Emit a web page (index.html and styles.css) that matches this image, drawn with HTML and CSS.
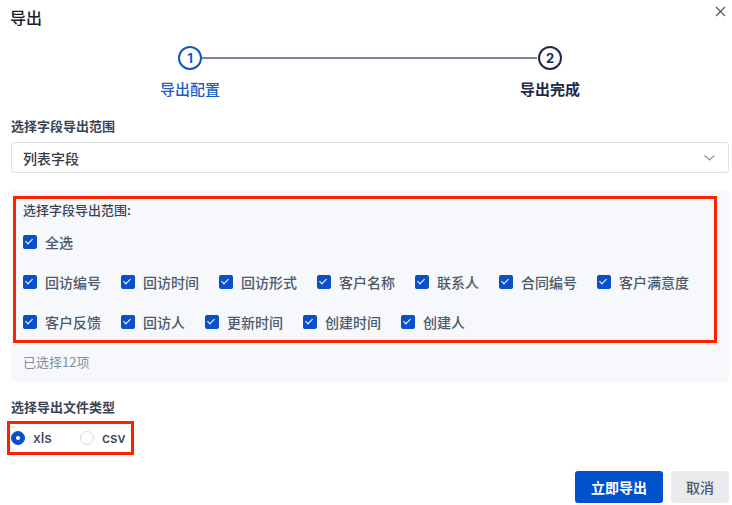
FILE: index.html
```html
<!DOCTYPE html>
<html lang="zh-CN">
<head>
  <meta charset="UTF-8">
  <title>导出</title>
  <link rel="stylesheet" href="styles.css">
</head>
<body>
  <div class="dialog">
    <div class="header">
      <h2>导出</h2>
      <span class="close">
        <svg width="11" height="11" viewBox="0 0 11 11"><path d="M1 1L10 10M10 1L1 10" stroke="#4e5a70" stroke-width="1.2" fill="none"/></svg>
      </span>
    </div>

    <div class="steps">
      <div class="step active">
        <div class="circle">1</div>
        <div class="step-label">导出配置</div>
      </div>
      <div class="step done">
        <div class="circle">2</div>
        <div class="step-label">导出完成</div>
      </div>
    </div>

    <div class="field-label">选择字段导出范围</div>
    <div class="select">
      <span>列表字段</span>
      <svg width="11" height="6" viewBox="0 0 11 6"><path d="M0.5 0.5L5.5 5L10.5 0.5" stroke="#8a93a5" stroke-width="1.2" fill="none"/></svg>
    </div>

    <div class="panel">
      <div class="mark-box fields">
        <div class="fields-title">选择字段导出范围:</div>
        <div class="check-row all">
          <label class="check"><span class="box"></span>全选</label>
        </div>
        <div class="check-row">
          <label class="check"><span class="box"></span>回访编号</label>
          <label class="check"><span class="box"></span>回访时间</label>
          <label class="check"><span class="box"></span>回访形式</label>
          <label class="check"><span class="box"></span>客户名称</label>
          <label class="check"><span class="box"></span>联系人</label>
          <label class="check"><span class="box"></span>合同编号</label>
          <label class="check"><span class="box"></span>客户满意度</label>
        </div>
        <div class="check-row">
          <label class="check"><span class="box"></span>客户反馈</label>
          <label class="check"><span class="box"></span>回访人</label>
          <label class="check"><span class="box"></span>更新时间</label>
          <label class="check"><span class="box"></span>创建时间</label>
          <label class="check"><span class="box"></span>创建人</label>
        </div>
      </div>
      <div class="count">已选择12项</div>
    </div>

    <div class="field-label type-label">选择导出文件类型</div>
    <div class="mark-box radios">
      <label class="radio checked"><span class="dot"></span>xls</label>
      <label class="radio"><span class="dot"></span>csv</label>
    </div>

    <div class="footer">
      <button class="btn primary">立即导出</button>
      <button class="btn">取消</button>
    </div>
  </div>
</body>
</html>
```

FILE: styles.css
```css
body {
  margin: 0;
  font-family: "Noto Sans CJK SC", "Noto Sans", sans-serif;
  background: #fff;
  color: #4e5969;
}
.dialog {
  width: 732px;
  height: 505px;
  box-sizing: border-box;
  padding: 5px 3px 0 11px;
}
.header {
  position: relative;
  height: 24px;
}
.header h2 {
  margin: 0 0 0 -1px;
  font-size: 16px;
  line-height: 24px;
  font-weight: 500;
  color: #1d2129;
}
.close {
  position: absolute;
  right: 3px;
  top: 1px;
  line-height: 0;
}
.steps {
  position: relative;
  display: flex;
  gap: 239px;
  margin: 17px 0 0 119px;
}
.steps::before {
  content: "";
  position: absolute;
  left: 72px;
  top: 11px;
  width: 335px;
  height: 2px;
  background: #7b8595;
}
.step {
  width: 120px;
  display: flex;
  flex-direction: column;
  align-items: center;
}
.circle {
  width: 20px;
  height: 20px;
  border: 2px solid #1357c6;
  border-radius: 50%;
  background: #fff;
  color: #1357c6;
  font-size: 13px;
  font-weight: 700;
  line-height: 20px;
  text-align: center;
  font-family: "Inter", "Noto Sans", sans-serif;
  position: relative;
}
.step.done .circle {
  border-color: #1e2a48;
  color: #1e2a48;
}
.step.done {
  margin-left: 1px;
}
.step-label {
  margin-top: 8px;
  font-size: 15px;
  line-height: 22px;
  font-weight: 500;
  color: #1a5fc8;
}
.step.done .step-label {
  color: #1e2a48;
  font-weight: 700;
}
.field-label {
  margin-top: 15px;
  font-size: 13px;
  line-height: 22px;
  font-weight: 700;
  color: #3b4456;
}
.select {
  margin-top: 5px;
  height: 29px;
  border: 1px solid #dcdfe6;
  border-radius: 3px;
  display: flex;
  align-items: center;
  justify-content: space-between;
  padding: 0 13px 0 11px;
  font-size: 14px;
  font-weight: 500;
  color: #333a47;
}
.panel {
  margin-top: 17px;
  background: #f7f8fb;
  border-radius: 3px;
  padding: 6px 12px 9px 2px;
}
.mark-box {
  border: 3px solid #ff2000;
}
.fields {
  padding: 0 7px 7px 7px;
}
.fields-title {
  font-size: 13px;
  line-height: 22px;
  font-weight: 500;
  color: #3b4456;
}
.check-row {
  display: flex;
  gap: 20px;
  margin-top: 18px;
}
.check-row.all {
  margin-top: 10px;
}
.check {
  display: flex;
  align-items: center;
  gap: 8px;
  font-size: 14px;
  line-height: 22px;
  font-weight: 500;
  color: #4e5969;
}
.box {
  width: 14px;
  height: 14px;
  border-radius: 2px;
  background: #0b50c8;
  position: relative;
}
.box::after {
  content: "";
  position: absolute;
  left: 4px;
  top: 2px;
  width: 3px;
  height: 6px;
  border: solid #fff;
  border-width: 0 1.5px 1.5px 0;
  transform: rotate(45deg);
}
.count {
  margin: 8px 0 0 10px;
  font-size: 13px;
  line-height: 22px;
  color: #86909c;
}
.type-label {
  margin-top: 14px;
}
.radios {
  display: inline-flex;
  gap: 28px;
  margin: 3px 0 0 -4px;
  padding: 3px 5px 3px 1px;
}
.radio {
  display: flex;
  align-items: center;
  gap: 8px;
  font-size: 14px;
  line-height: 22px;
  font-weight: 500;
  color: #3b4456;
  font-family: "Inter", "Noto Sans", sans-serif;
}
.dot {
  width: 12px;
  height: 12px;
  border-radius: 50%;
  border: 1px solid #d5d9e0;
  background: #fff;
  position: relative;
}
.radio.checked .dot {
  border-color: #0b50c8;
  background: #0b50c8;
}
.radio.checked .dot::after {
  content: "";
  position: absolute;
  left: 4px;
  top: 4px;
  width: 4px;
  height: 4px;
  border-radius: 50%;
  background: #fff;
}
.footer {
  display: flex;
  justify-content: flex-end;
  gap: 8px;
  margin-top: 16px;
}
.btn {
  height: 32px;
  padding: 0 15px;
  border: none;
  border-radius: 3px;
  background: #e9ebef;
  color: #4e5969;
  font-family: "Noto Sans CJK SC", sans-serif;
  font-size: 14px;
  font-weight: 500;
}
.btn.primary {
  padding: 0 16px;
  background: #0052cc;
  color: #fff;
  font-weight: 700;
}
```
